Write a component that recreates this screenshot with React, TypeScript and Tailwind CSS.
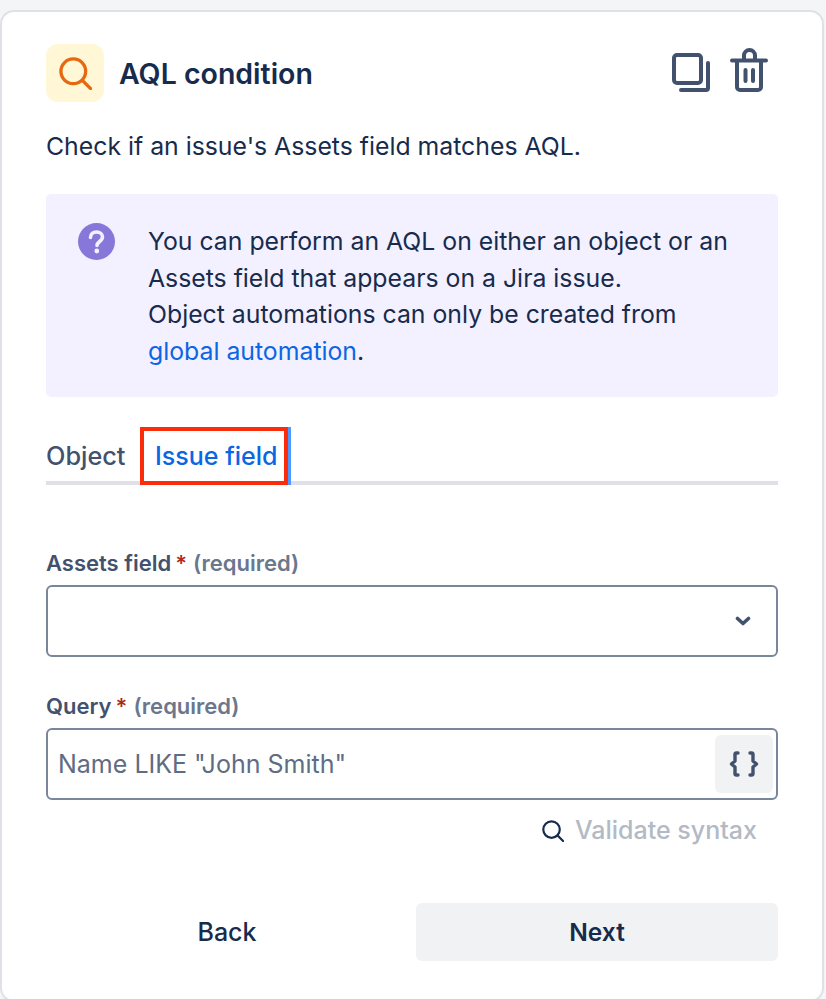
import React from 'react';

const SearchIcon = ({ className }: { className?: string }) => (
  <svg className={className} viewBox="0 0 24 24" fill="none" stroke="currentColor" strokeWidth={2.4} strokeLinecap="round">
    <circle cx="10.400" cy="10.400" r="9" />
    <path d="M17 17l6 6" />
  </svg>
);

const CopyIcon = () => (
  <svg className="w-[40px] h-[46px]" viewBox="0 0 40 46" fill="none" stroke="#42526e" strokeWidth={4} strokeLinecap="round" strokeLinejoin="round">
    <rect x="3" y="5" width="27" height="28" rx="3" />
    <path d="M37 13v25a2 2 0 0 1-2 2H10" />
  </svg>
);

const TrashIcon = () => (
  <svg className="w-[38px] h-[50px]" viewBox="0 0 38 50" fill="none" stroke="#42526e" strokeWidth={4} strokeLinecap="round" strokeLinejoin="round">
    <path d="M2 12.500h34" />
    <path d="M14 12V7.500a5.500 5.500 0 0 1 11 0V12" />
    <path d="M7 13v26a3 3 0 0 0 3 3h18a3 3 0 0 0 3-3V13" />
    <path d="M15.500 22v11M23 22v11" />
  </svg>
);

const Chevron = () => (
  <svg className="w-[16px] h-[10px]" viewBox="0 0 16 10" fill="none" stroke="#42526e" strokeWidth={3.600} strokeLinecap="round" strokeLinejoin="round">
    <path d="M2.500 2.500L8 7.500l5.500-5" />
  </svg>
);

const Braces = () => (
  <svg className="w-[30px] h-[26px]" viewBox="0 0 30 26" fill="none" stroke="#42526e" strokeWidth={3.400} strokeLinecap="round" strokeLinejoin="round">
    <path d="M9 2H7.500A1.500 1.500 0 0 0 6 3.500V10l-3.500 3L6 16v6.500A1.500 1.500 0 0 0 7.500 24H9" />
    <path d="M21 2h1.500A1.500 1.500 0 0 1 24 3.500V10l3.500 3-3.500 3v6.500a1.500 1.500 0 0 1-1.500 1.500H21" />
  </svg>
);

const QuestionIcon = () => (
  <svg className="w-[37px] h-[37px] shrink-0" viewBox="0 0 37 37">
    <circle cx="18.500" cy="18.500" r="18.500" fill="#8777d9" />
    <path d="M12.500 14.500c0-3.500 2.700-5.500 6-5.500s6 2 6 5c0 4.500-5.500 4.500-5.500 8.500" fill="none" stroke="#f3f0ff" strokeWidth={3.600} strokeLinecap="round" />
    <circle cx="18.800" cy="28" r="2.400" fill="#f3f0ff" />
  </svg>
);

const FieldLabel = ({ name }: { name: string }) => (
  <div className="h-[28px] flex items-center text-[22px] font-semibold text-[#42526e]">
    {name}
    <span className="ml-[4px] text-[#ae2a19]">*</span>
    <span className="ml-[6px] text-[#6b778c]">(required)</span>
  </div>
);

export default function App() {
  return (
    <div className="h-[999px] w-[826px] overflow-hidden bg-[#f4f5f7] pt-[10px] pr-[2px] font-['Inter',sans-serif] text-[#172b4d]">
      <div className="h-[992px] rounded-[14px] border-2 border-[#dfe1e6] bg-white pl-[44px] pr-[44px] pt-[32px]">
        <div className="flex items-center h-[58px]">
          <div className="w-[58px] h-[58px] rounded-[12px] bg-[#fff7d6] flex items-center justify-center">
            <SearchIcon className="w-[33px] h-[33px] text-[#e56910]" />
          </div>
          <h2 className="ml-[15px] pt-[2px] text-[28.500px] font-semibold">AQL condition</h2>
          <div className="ml-auto mr-[10px] flex items-center gap-[19px]">
            <CopyIcon />
            <TrashIcon />
          </div>
        </div>

        <p className="mt-[26px] text-[24.800px] leading-[36px]">Check if an issue's Assets field matches AQL.</p>

        <div className="mt-[30px] h-[203px] rounded-[5px] bg-[#f3f0ff] pl-[32px] pr-[32px] pt-[29px] flex">
          <QuestionIcon />
          <p className="ml-[33px] text-[24.800px] leading-[36.500px]">
            You can perform an AQL on either an object or an Assets field that appears on a Jira issue.
            <br />
            Object automations can only be created from <span className="text-[#0b66e4]">global automation</span>.
          </p>
        </div>

        <div className="mt-[30px] h-[58px] flex border-b-4 border-[#dfe1e6]">
          <div className="w-[94px] pt-[11px] text-[25.300px] leading-[36px] font-medium text-[#42526e]">Object</div>
          <div className="relative w-[151px] pl-[15px] pt-[11px] text-[25px] leading-[36px] font-medium text-[#0b66e4]">
            Issue field
            <div className="absolute left-0 top-0 w-[148px] h-[58px] border-[4px] border-[#fb2c0a]" />
            <div className="absolute right-0 top-0 w-[3px] h-[58px] bg-[#4c9aff]" />
          </div>
        </div>

        <div className="mt-[64px]"><FieldLabel name="Assets field" /></div>
        <div className="mt-[8px] h-[72px] rounded-[6px] border-2 border-[#7a869a] flex items-center justify-end pr-[25px]">
          <Chevron />
        </div>

        <div className="mt-[35px]"><FieldLabel name="Query" /></div>
        <div className="mt-[8px] h-[72px] rounded-[6px] border-2 border-[#7a869a] flex items-center pl-[10px] pr-[3px]">
          <span className="pt-[1px] text-[25px] text-[#5e6c84]">Name LIKE "John Smith"</span>
          <div className="ml-auto w-[58px] h-[58px] rounded-[6px] bg-[#f1f2f4] flex items-center justify-center">
            <Braces />
          </div>
        </div>

        <div className="mt-[13px] h-[36px] flex items-center justify-end pr-[21px]">
          <SearchIcon className="w-[22px] h-[22px] text-[#172b4d]" />
          <span className="ml-[11px] text-[25px] font-medium text-[#b3bac5]">Validate syntax</span>
        </div>

        <div className="mt-[54px] flex">
          <button className="w-[362px] h-[58px] pt-[1px] text-[25px] font-medium">Back</button>
          <button className="ml-auto w-[362px] h-[58px] rounded-[6px] bg-[#f1f2f4] text-[24.500px] font-semibold">Next</button>
        </div>
      </div>
    </div>
  );
}
